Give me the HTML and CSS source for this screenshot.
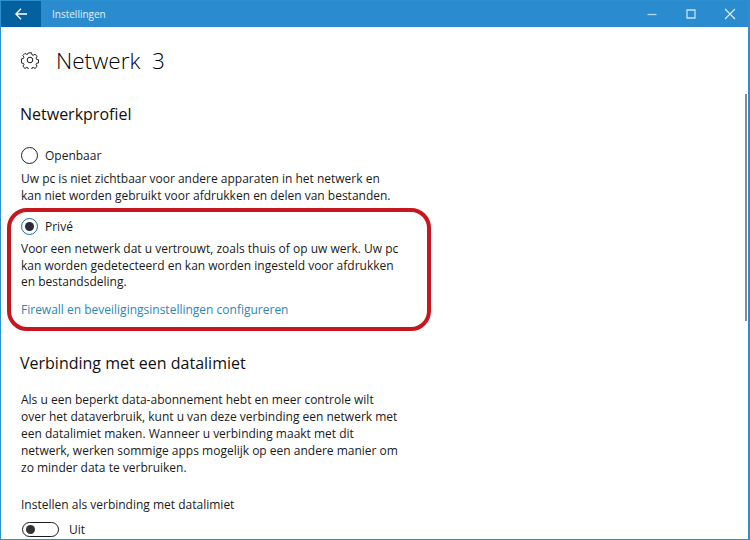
FILE: index.html
```html
<!DOCTYPE html>
<html lang="nl">
<head>
<meta charset="utf-8">
<title>Instellingen</title>
<link rel="stylesheet" href="styles.css">
</head>
<body>
<div class="window">
  <header class="titlebar">
    <div class="back">
      <svg width="12" height="12" viewBox="0 0 12 12"><path d="M6 .8.9 6 6 11.200M1 6h11" fill="none" stroke="#fff" stroke-width="1.300"/></svg>
    </div>
    <div class="app-title">Instellingen</div>
    <div class="controls">
      <svg width="12" height="12" viewBox="0 0 12 12"><path d="M1.500 6.500h9" stroke="#a9d8f5" stroke-width="1.300"/></svg>
      <svg width="12" height="12" viewBox="0 0 12 12"><path d="M2 2h8v8H2z" fill="none" stroke="#bfe3f8" stroke-width="1.300"/></svg>
      <svg width="12" height="12" viewBox="0 0 12 12"><path d="M1 1l10 10M11 1 1 11" stroke="#e0f1fb" stroke-width="1.100"/></svg>
    </div>
  </header>
  <main class="content">
    <div class="page-head">
      <svg class="gear" width="18" height="18" viewBox="0 0 18 18"><path d="M7.300 1h3.400l.5 2.200 1.400.6 1.900-1.200 2.400 2.400-1.200 1.900.6 1.400 2.200.5v3.400l-2.200.5-.6 1.400 1.200 1.900-2.400 2.400-1.900-1.200-1.400.6-.5 2.200H7.300l-.5-2.200-1.400-.6-1.900 1.200-2.400-2.400 1.200-1.900-.6-1.400-2.200-.5V7.800l2.200-.5.6-1.400-1.200-1.900 2.400-2.400 1.900 1.200 1.400-.6z" transform="translate(.9 .9) scale(.9)" fill="none" stroke="#1a1a1a" stroke-width="1.100"/><circle cx="9" cy="9" r="2.800" fill="none" stroke="#1a1a1a" stroke-width="1"/></svg>
      <h1>Netwerk&nbsp; 3</h1>
    </div>
    <h2 class="section-first">Netwerkprofiel</h2>
    <div class="radio-row first-radio"><span class="radio"></span><span>Openbaar</span></div>
    <p class="desc">Uw pc is niet zichtbaar voor andere apparaten in het netwerk en<br>kan niet worden gebruikt voor afdrukken en delen van bestanden.</p>
    <div class="radio-row second-radio"><span class="radio on"></span><span>Privé</span></div>
    <p class="desc desc-private">Voor een netwerk dat u vertrouwt, zoals thuis of op uw werk. Uw pc<br>kan worden gedetecteerd en kan worden ingesteld voor afdrukken<br>en bestandsdeling.</p>
    <a class="link" href="#">Firewall en beveiligingsinstellingen configureren</a>
    <h2 class="section-second">Verbinding met een datalimiet</h2>
    <p class="desc para">Als u een beperkt data-abonnement hebt en meer controle wilt<br>over het dataverbruik, kunt u van deze verbinding een netwerk met<br>een datalimiet maken. Wanneer u verbinding maakt met dit<br>netwerk, werken sommige apps mogelijk op een andere manier om<br>zo minder data te verbruiken.</p>
    <div class="label">Instellen als verbinding met datalimiet</div>
    <div class="toggle-row"><span class="toggle"><span class="knob"></span></span><span>Uit</span></div>
    <div class="highlight"></div>
    <div class="scrollbar"></div>
  </main>
</div>
</body>
</html>
```
FILE: styles.css
```css
* { box-sizing: border-box; }
html, body { margin: 0; height: 100%; background: #fff; overflow: hidden; }
body { font-family: "Open Sans", "Noto Sans", sans-serif; font-size: 12px; color: #1a1a1a; }
.window { width: 750px; height: 540px; display: flex; flex-direction: column; border: solid #2b8fd0; border-width: 1px 2px 1px 1px; overflow: hidden; }
.titlebar { flex: 0 0 26px; margin-left: -1px; margin-right: -2px; background: #2a8ccf; display: flex; align-items: center; color: #e4f3fc; }
.back { width: 41px; height: 26px; background: #05609f; display: flex; align-items: center; justify-content: center; }
.app-title { margin-left: 11px; font-size: 10px; font-weight: 400; flex: 1; }
.controls { display: flex; gap: 27px; margin-right: 14px; align-items: center; }
.content { position: relative; flex: 1; padding-left: 19px; overflow: hidden; }
.page-head { display: flex; align-items: center; height: 36px; margin-top: 15px; }
.gear { margin-right: 17px; margin-left: 1px; }
h1 { margin: 0; padding-top: 2px; font-size: 22.500px; font-weight: 300; line-height: 36px; color: #000; white-space: pre; }
h2 { margin: 0; font-size: 16px; font-weight: 400; line-height: 22px; color: #111; }
.section-first { margin-top: 25px; }
.radio-row { display: flex; align-items: center; height: 18px; margin-left: 1px; gap: 7px; font-size: 12px; }
.first-radio { margin-top: 21px; }
.second-radio { margin-top: 13px; }
.radio { width: 17px; height: 17px; border-radius: 50%; border: 1.500px solid #222; position: relative; flex: none; }
.radio.on { border-color: #1c6f9e; }
.radio.on::after { content: ""; position: absolute; inset: 3px; border-radius: 50%; background: #2a2a3a; }
.desc { margin: 6px 0 0 1px; line-height: 17px; font-size: 12px; }
.desc-private { margin-top: 6px; line-height: 16.500px; }
.link { display: block; margin: 10px 0 0 1px; color: #2c86b5; text-decoration: none; line-height: 17px; font-size: 12px; }
.section-second { margin-top: 34px; }
.para { margin-top: 17px; }
.label { margin: 20px 0 0 1px; line-height: 17px; }
.toggle-row { display: flex; align-items: center; gap: 10px; margin: 8px 0 0 2px; height: 17px; }
.toggle { width: 37px; height: 15px; border: 1.500px solid #1a1a1a; border-radius: 8px; display: flex; align-items: center; padding-left: 3px; }
.knob { width: 9px; height: 9px; border-radius: 50%; background: #333; }
.highlight { position: absolute; left: 6px; top: 181px; width: 424px; height: 123px; border: 4px solid #c8161e; border-radius: 20px; }
.scrollbar { position: absolute; right: 1px; top: 67px; width: 2px; height: 227px; background: #8a8a8a; }
```
